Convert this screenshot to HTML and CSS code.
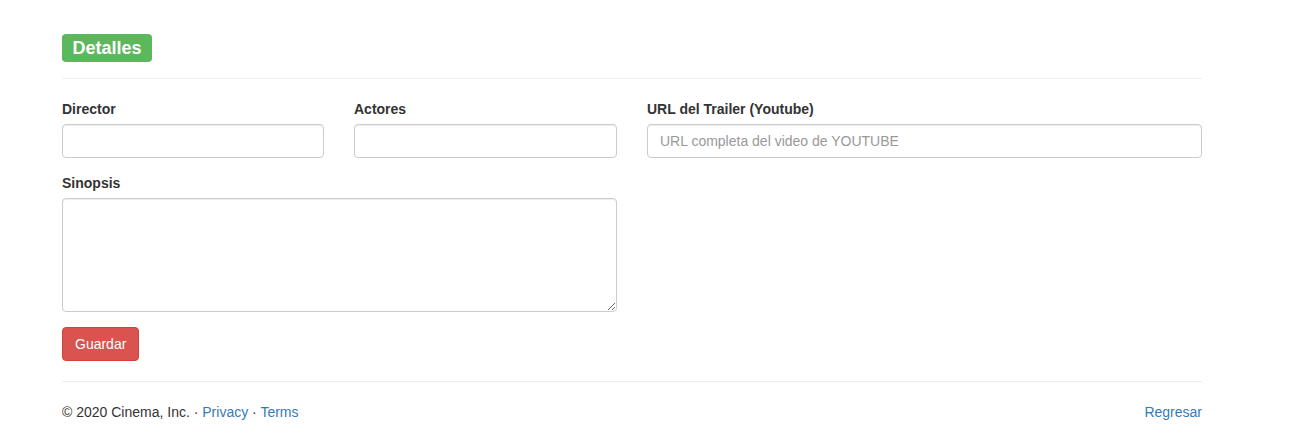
FILE: index.html
```html
<!DOCTYPE html>
<html lang="es">
<head>
<meta charset="utf-8">
<title>Detalles</title>
<link rel="stylesheet" href="styles.css">
</head>
<body>
<div class="page">
  <div class="heading"><span class="badge">Detalles</span></div>
  <hr class="rule">
  <form class="form">
    <div class="field">
      <label class="lbl" for="director">Director</label>
      <input class="ctl" id="director" type="text">
    </div>
    <div class="field">
      <label class="lbl" for="actores">Actores</label>
      <input class="ctl" id="actores" type="text">
    </div>
    <div class="field">
      <label class="lbl" for="trailer">URL del Trailer (Youtube)</label>
      <input class="ctl" id="trailer" type="text" placeholder="URL completa del video de YOUTUBE">
    </div>
    <div class="field span2">
      <label class="lbl" for="sinopsis">Sinopsis</label>
      <textarea class="ctl area" id="sinopsis"></textarea>
    </div>
    <div class="actions">
      <button class="btn" type="button">Guardar</button>
    </div>
  </form>
  <hr class="rule foot-rule">
  <footer class="footer">
    <p class="copy">© 2020 Cinema, Inc. · <a href="#">Privacy</a> · <a href="#">Terms</a></p>
    <a href="#" class="back">Regresar</a>
  </footer>
</div>
</body>
</html>
```
FILE: styles.css
```css
* { box-sizing: border-box; }
html, body { margin: 0; padding: 0; background: #fff; }
body {
  font-family: "Liberation Sans", Arial, sans-serif;
  font-size: 14px;
  line-height: 20px;
  color: #333;
}
.page {
  width: 1140px;
  margin-left: 62px;
  padding-top: 34px;
}
.heading { display: flex; height: 28px; }
.badge {
  display: inline-block;
  background: #5cb85c;
  color: #fff;
  font-weight: bold;
  font-size: 18px;
  line-height: 28px;
  height: 28px;
  padding: 0 10.5px;
  border-radius: 4px;
}
.rule {
  border: 0;
  border-top: 1px solid #eee;
  margin: 16px 0 20px;
  height: 0;
}
.form {
  display: grid;
  grid-template-columns: 262px 263px 555px;
  column-gap: 30px;
}
.field { display: flex; flex-direction: column; margin-bottom: 15px; }
.span2 { grid-column: 1 / 3; }
.lbl {
  font-weight: bold;
  margin-bottom: 5px;
  line-height: 20px;
}
.ctl {
  height: 34px;
  padding: 6px 12px;
  font-family: inherit;
  font-size: 14px;
  color: #555;
  background: #fff;
  border: 1px solid #ccc;
  border-radius: 4px;
  box-shadow: inset 0 1px 1px rgba(0,0,0,.075);
  width: 100%;
}
.ctl::placeholder { color: #999; }
.area { height: 114px; resize: vertical; }
.actions { grid-column: 1 / 4; display: flex; }
.btn {
  height: 34px;
  padding: 6px 12px;
  font-family: inherit;
  font-size: 14px;
  line-height: 20px;
  color: #fff;
  background: #d9534f;
  border: 1px solid #d43f3a;
  border-radius: 4px;
}
.foot-rule { margin: 20px 0 20px; }
.footer {
  display: flex;
  justify-content: space-between;
  align-items: center;
}
.copy { margin: 0; }
a { color: #337ab7; text-decoration: none; }
```
